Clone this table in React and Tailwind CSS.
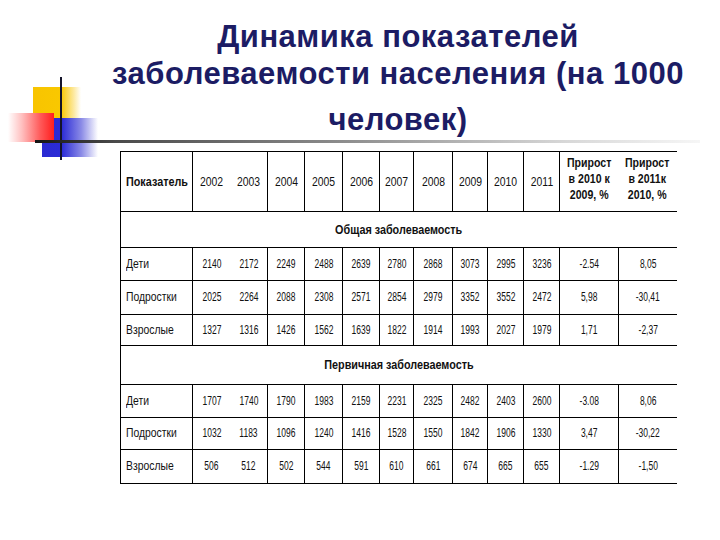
import React from "react";

const COLS = [
  "w-[72px]", "w-[38px]", "w-[37px]", "w-[37px]", "w-[38px]", "w-[37px]", "w-[34px]",
  "w-[39px]", "w-[35px]", "w-[36px]", "w-[36px]", "w-[59px]", "w-[59px]",
];
const HEAD_BL = [1, 1, 0, 1, 1, 1, 1, 1, 1, 1, 1, 1, 0];
const DATA_BL = [1, 1, 0, 1, 1, 1, 1, 1, 1, 1, 1, 1, 1];

const years = ["2002", "2003", "2004", "2005", "2006", "2007", "2008", "2009", "2010", "2011"];

const general = [
  ["Дети", "2140", "2172", "2249", "2488", "2639", "2780", "2868", "3073", "2995", "3236", "-2.54", "8,05"],
  ["Подростки", "2025", "2264", "2088", "2308", "2571", "2854", "2979", "3352", "3552", "2472", "5,98", "-30,41"],
  ["Взрослые", "1327", "1316", "1426", "1562", "1639", "1822", "1914", "1993", "2027", "1979", "1,71", "-2,37"],
];
const primary = [
  ["Дети", "1707", "1740", "1790", "1983", "2159", "2231", "2325", "2482", "2403", "2600", "-3.08", "8,06"],
  ["Подростки", "1032", "1183", "1096", "1240", "1416", "1528", "1550", "1842", "1906", "1330", "3,47", "-30,22"],
  ["Взрослые", "506", "512", "502", "544", "591", "610", "661", "674", "665", "655", "-1.29", "-1,50"],
];

function cellCls(i, flags) {
  return [
    COLS[i],
    "h-full shrink-0 flex items-center",
    i === 0 ? "justify-start pl-[5px]" : "justify-center",
    flags[i] ? "border-l border-black" : "",
  ].join(" ");
}

function DataRow({ row, h, last }) {
  return (
    <div className={`flex border-t border-black ${h} ${last ? "border-b" : ""}`}>
      {row.map((v, i) => (
        <div key={i} className={cellCls(i, DATA_BL)}>
          {i === 0 ? (
            <span className="inline-block origin-left scale-x-[0.83] text-[12.5px] text-[#111] whitespace-nowrap">{v}</span>
          ) : (
            <span className="inline-block scale-x-[0.68] text-[12.5px] text-[#111] whitespace-nowrap">{v}</span>
          )}
        </div>
      ))}
    </div>
  );
}

function SectionRow({ title, h }) {
  return (
    <div className={`flex items-center justify-center border-t border-l border-black ${h}`}>
      <span className="inline-block scale-x-[0.9] text-[12px] font-bold text-[#111] whitespace-nowrap">{title}</span>
    </div>
  );
}

function Logo() {
  return (
    <div className="absolute left-0 top-0 w-[130px] h-[170px] pointer-events-none">
      {/* yellow */}
      <div className="absolute left-[33px] top-[87px] w-[48px] h-[31px] bg-[linear-gradient(to_right,#f8c400_0%,#f9c800_58%,#fde9a0_85%,rgba(255,255,255,0)_100%)]" />
      {/* blue */}
      <div className="absolute left-[42px] top-[118px] w-[56px] h-[39px] bg-[linear-gradient(to_right,#2a2ad2_0%,#2b2bd6_35%,#8a8ae6_70%,rgba(255,255,255,0)_100%)]" />
      {/* red */}
      <div className="absolute left-[8px] top-[113px] w-[46px] h-[29px] bg-[linear-gradient(to_left,#ff1e1e_0%,#ff5a5a_30%,#ffc0c0_70%,rgba(255,255,255,0)_100%)]" />
      {/* vertical line */}
      <div className="absolute left-[60px] top-[77px] w-[2px] h-[83px] bg-[#14142a]" />
    </div>
  );
}

export default function App() {
  return (
    <div className="relative w-[720px] h-[540px] bg-white overflow-hidden font-['Liberation_Sans',Arial,sans-serif]">
      <Logo />
      <div className="relative ml-[100px] w-[596px] pt-[18px] text-center font-bold text-[31px] tracking-[0.5px] text-[#1c1c64] whitespace-nowrap">
        <div className="h-[37px] leading-[37px]">Динамика показателей</div>
        <div className="h-[37px] leading-[37px]">заболеваемости населения (на 1000</div>
        <div className="mt-[9px] h-[37px] leading-[37px]">человек)</div>
      </div>
      <div className="relative ml-[35px] mt-[2px] w-[665px] h-[3px] bg-[linear-gradient(to_right,#141414_0%,#4a4a4a_12%,#8a8a8a_45%,#d8d8d8_80%,#f6f6f6_100%)]" />

      <div className="relative ml-[120px] mt-[8px] w-[557px]">
        {/* header */}
        <div className="flex border-t border-black h-[60px]">
          <div className={cellCls(0, HEAD_BL)}>
            <span className="inline-block origin-left scale-x-[0.9] text-[12px] font-bold text-[#111]">Показатель</span>
          </div>
          {years.map((y, k) => (
            <div key={y} className={cellCls(k + 1, HEAD_BL)}>
              <span className="inline-block scale-x-[0.8] text-[13px] text-[#111]">{y}</span>
            </div>
          ))}
          <div className={cellCls(11, HEAD_BL)}>
            <span className="inline-block mb-[6px] scale-x-[0.88] text-[12px] leading-[16px] font-bold text-[#111] text-center whitespace-nowrap">
              Прирост<br />в 2010 к<br />2009, %
            </span>
          </div>
          <div className={cellCls(12, HEAD_BL)}>
            <span className="inline-block mb-[6px] scale-x-[0.88] text-[12px] leading-[16px] font-bold text-[#111] text-center whitespace-nowrap">
              Прирост<br />в 2011к<br />2010, %
            </span>
          </div>
        </div>
        <SectionRow title="Общая заболеваемость" h="h-[36px]" />
        <DataRow row={general[0]} h="h-[33px]" />
        <DataRow row={general[1]} h="h-[34px]" />
        <DataRow row={general[2]} h="h-[31px]" />
        <SectionRow title="Первичная заболеваемость" h="h-[39px]" />
        <DataRow row={primary[0]} h="h-[33px]" />
        <DataRow row={primary[1]} h="h-[32px]" />
        <DataRow row={primary[2]} h="h-[35px]" last />
      </div>
    </div>
  );
}
